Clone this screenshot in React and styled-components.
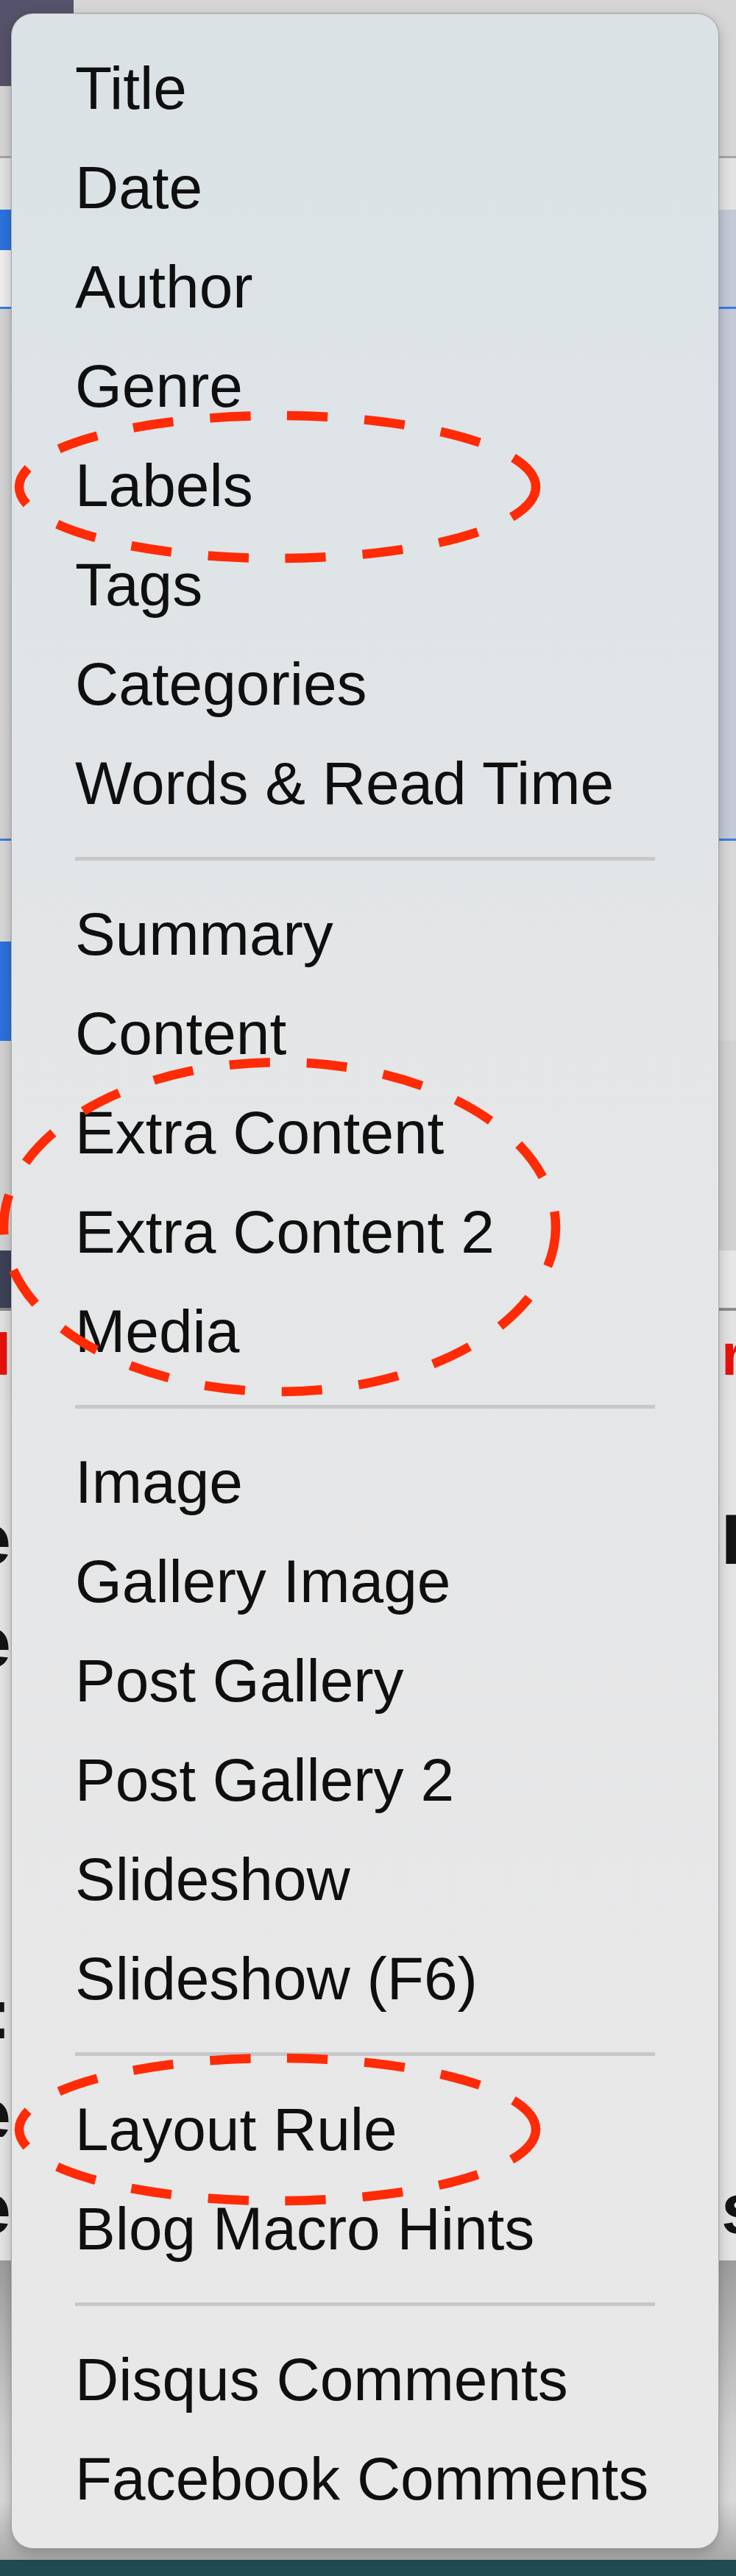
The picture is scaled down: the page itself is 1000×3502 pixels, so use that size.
import React from "react";
import styled, { createGlobalStyle } from "styled-components";

const GlobalStyle = createGlobalStyle`
  html, body {
    margin: 0;
    padding: 0;
    background: #d6d6d6;
  }
  * {
    box-sizing: border-box;
  }
`;

const groups = [
  ["Title", "Date", "Author", "Genre", "Labels", "Tags", "Categories", "Words & Read Time"],
  ["Summary", "Content", "Extra Content", "Extra Content 2", "Media"],
  ["Image", "Gallery Image", "Post Gallery", "Post Gallery 2", "Slideshow", "Slideshow (F6)"],
  ["Layout Rule", "Blog Macro Hints"],
  ["Disqus Comments", "Facebook Comments"],
];

// the app window behind the menu, only its edges show
const bands = [
  { h: 212, bg: "#d6d6d6", icon: true },
  { h: 3, bg: "#a6a6a6" },
  { h: 70, bg: "#e3e3e3" },
  { h: 55, bg: "#e3e3e3", left: "#2c72de", right: "#c3c9d5" },
  { h: 77, bg: "#efefef", right: "#c3c9d5" },
  { h: 3, bg: "#3a7ce6" },
  { h: 720, bg: "#d3d3d3", right: "#c4cad6" },
  { h: 3, bg: "#3a7ce6" },
  { h: 137, bg: "#d8d8d8" },
  { h: 135, bg: "#d8d8d8", left: "#2c72de" },
  { h: 285, bg: "#d2d2d2" },
  { h: 78, bg: "#e6e6e6", left: "#3d4258" },
  { h: 4, bg: "#8c8c8c" },
  { h: 120, bg: "#e2e2e2", leftText: "l", rightText: "r", color: "#e8120c", size: 80 },
  { h: 148, bg: "#e4e4e4" },
  { h: 85, bg: "#e4e4e4", leftText: "e", rightText: "I" },
  { h: 55, bg: "#e4e4e4" },
  { h: 85, bg: "#e4e4e4", leftText: "e" },
  { h: 425, bg: "#e4e4e4" },
  { h: 75, bg: "#e4e4e4", leftText: "n:" },
  { h: 70, bg: "#e4e4e4" },
  { h: 60, bg: "#e4e4e4", leftText: "e" },
  { h: 60, bg: "#e4e4e4" },
  { h: 75, bg: "#e4e4e4", leftText: "e", rightText: "s" },
  { h: 33, bg: "#e4e4e4" },
  { h: 407, bg: "linear-gradient(180deg, #9d9d9d 0%, #cfcfcf 55%, #d9d9d9 80%, #a9a9a9 100%)" },
  { h: 22, bg: "#1f4b53" },
];

const marks = [
  { cx: 377, cy: 662, rx: 351, ry: 97 },
  { cx: 380, cy: 1668, rx: 375, ry: 224 },
  { cx: 377, cy: 2895, rx: 351, ry: 97 },
];

function App() {
  return (
    <Page>
      <GlobalStyle />
      <Backdrop>
        {bands.map((b, i) => (
          <Band key={i} $h={b.h} $bg={b.bg}>
            {b.icon ? (
              <AppIcon />
            ) : (
              <>
                <Edge $w={15} $bg={b.left} $side="left">
                  {b.leftText && (
                    <EdgeText $color={b.color} $size={b.size}>
                      {b.leftText}
                    </EdgeText>
                  )}
                </Edge>
                <Edge $w={23} $bg={b.right} $side="right">
                  {b.rightText && (
                    <EdgeText $color={b.color} $size={b.size}>
                      {b.rightText}
                    </EdgeText>
                  )}
                </Edge>
              </>
            )}
          </Band>
        ))}
      </Backdrop>

      <Menu>
        {groups.map((items, gi) => (
          <React.Fragment key={gi}>
            {gi > 0 && (
              <Separator>
                <Rule />
              </Separator>
            )}
            {items.map((label) => (
              <Item key={label}>{label}</Item>
            ))}
          </React.Fragment>
        ))}
      </Menu>

      <Marks viewBox="0 0 1000 3502" width="1000" height="3502">
        {marks.map((m, i) => (
          <ellipse
            key={i}
            cx={m.cx}
            cy={m.cy}
            rx={m.rx}
            ry={m.ry}
            fill="none"
            stroke="#ff2b06"
            strokeWidth="12.5"
            strokeDasharray="55 50"
          />
        ))}
      </Marks>
    </Page>
  );
}

const Page = styled.div`
  position: relative;
  width: 1000px;
  height: 3502px;
  overflow: hidden;
  font-family: "Liberation Sans", Arial, sans-serif;
`;

const Backdrop = styled.div`
  display: flex;
  flex-direction: column;
  height: 100%;
`;

const Band = styled.div`
  flex: none;
  height: ${(p) => p.$h}px;
  background: ${(p) => p.$bg};
  display: flex;
  justify-content: space-between;
  align-items: stretch;
  overflow: hidden;
`;

const Edge = styled.div`
  width: ${(p) => p.$w}px;
  background: ${(p) => p.$bg || "transparent"};
  display: flex;
  align-items: center;
  justify-content: ${(p) => (p.$side === "left" ? "flex-end" : "flex-start")};
  padding-left: ${(p) => (p.$side === "right" ? 3 : 0)}px;
  overflow: hidden;
`;

const EdgeText = styled.span`
  font-size: ${(p) => p.$size || 96}px;
  font-weight: 700;
  line-height: 1;
  white-space: nowrap;
  color: ${(p) => p.$color || "#141414"};
`;

const AppIcon = styled.div`
  width: 100px;
  height: 117px;
  background: #55536b;
  border-radius: 0 0 22px 0;
`;

const Menu = styled.div`
  position: absolute;
  top: 18px;
  left: 15px;
  width: 962px;
  padding: 33px 0 27px;
  display: flex;
  flex-direction: column;
  border: 1px solid #a9aaac;
  border-radius: 30px;
  background: linear-gradient(
    180deg,
    #dae2e6 0%,
    #dfe4e7 22%,
    #e5e6e7 45%,
    #e8e8e9 100%
  );
  box-shadow: 0 6px 18px rgba(0, 0, 0, 0.22), 0 0 2px rgba(0, 0, 0, 0.2);
`;

const Item = styled.div`
  height: 135px;
  padding-left: 86px;
  font-size: 82px;
  line-height: 135px;
  color: #0f0f0f;
  white-space: nowrap;
`;

const Separator = styled.div`
  height: 70px;
  display: flex;
  align-items: center;
  padding: 0 86px;
`;

const Rule = styled.div`
  flex: 1;
  height: 5px;
  background: #c6c7c9;
`;

const Marks = styled.svg`
  position: absolute;
  top: 0;
  left: 0;
  pointer-events: none;
`;

export default App;
